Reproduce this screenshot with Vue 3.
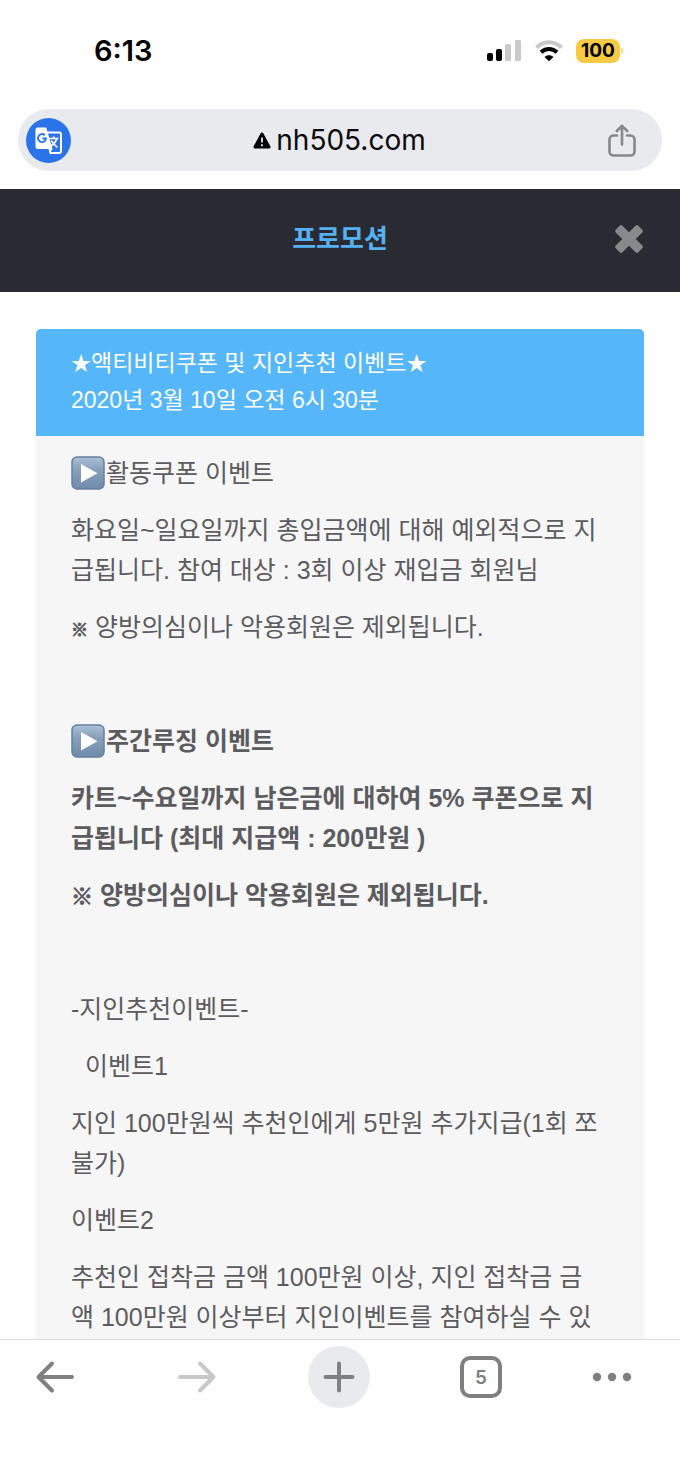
<script setup>
const blocks = [
  { text: '활동쿠폰 이벤트', icon: true },
  { text: '화요일~일요일까지 총입금액에 대해 예외적으로 지급됩니다. 참여 대상 : 3회 이상 재입금 회원님' },
  { mark: '※', text: ' 양방의심이나 악용회원은 제외됩니다.' },
  { text: '\u00a0' },
  { text: '주간루징 이벤트', icon: true, bold: true },
  { text: '카트~수요일까지 남은금에 대하여 5% 쿠폰으로 지급됩니다 (최대 지급액 : 200만원 )', bold: true },
  { mark: '※', text: ' 양방의심이나 악용회원은 제외됩니다.', bold: true },
  { text: '\u00a0' },
  { text: '-지인추천이벤트-' },
  { text: '\u00a0\u00a0이벤트1' },
  { text: '지인 100만원씩 추천인에게 5만원 추가지급(1회 쪼불가)' },
  { text: '이벤트2' },
  { text: '추천인 접착금 금액 100만원 이상, 지인 접착금 금액 100만원 이상부터 지인이벤트를 참여하실 수 있' },
]
</script>

<template>
  <div class="screen">
    <div class="status">
      <span class="time">6:13</span>
      <div class="indicators">
        <svg class="signal" width="34" height="22" viewBox="0 0 34 22" aria-hidden="true">
          <rect x="0" y="13" width="6" height="8" rx="2" fill="#000" />
          <rect x="9" y="9" width="6" height="12" rx="2" fill="#000" />
          <rect x="18" y="4" width="6" height="17" rx="1.500" fill="#cacaca" />
          <rect x="28" y="0" width="6" height="21" rx="1.500" fill="#cacaca" />
        </svg>
        <svg class="wifi" width="28" height="22" viewBox="0 0 28 22" aria-hidden="true">
          <path d="M1.500 7.600C8.300.400 19.700.400 26.500 7.600" fill="none" stroke="#c8c8c8" stroke-width="4" />
          <path d="M6 12.300c4.500-4.400 11.500-4.400 16 0" fill="none" stroke="#000" stroke-width="4" />
          <path d="M14 21.300 9.500 17c2.500-2.400 6.500-2.400 9 0z" fill="#000" />
        </svg>
        <span class="battery">100</span>
      </div>
    </div>

    <div class="address">
      <button class="translate" aria-label="Translate">
        <svg width="27" height="27" viewBox="0 0 27 27" aria-hidden="true">
          <path d="M11 5.500h13a2 2 0 0 1 2 2v16.500a2 2 0 0 1-2 2H15.500L11 5.500z" fill="#2a73e8" stroke="#fff" stroke-width="2" />
          <path d="M2.500.5h8.700L17.500 22H2.500a2 2 0 0 1-2-2V2.500a2 2 0 0 1 2-2z" fill="#fff" />
          <path d="M17.500 22 15 25.800 13.600 22z" fill="#fff" />
          <path d="M9.800 8.200a4 4 0 1 0 1.200 3.300H7.400" fill="none" stroke="#2a73e8" stroke-width="1.900" />
          <path d="M14 11.500h9.500M18.700 9.500v2M21.800 11.500c-.7 3-3 5.500-5.800 7.500M16.300 13.500c1.200 2.600 3.300 4.700 6 6.800" fill="none" stroke="#fff" stroke-width="1.700" />
        </svg>
      </button>
      <button class="host">
        <svg width="18" height="17" viewBox="0 0 18 17" aria-hidden="true">
          <path d="M9 2 16 15H2z" fill="#000" stroke="#000" stroke-width="3" stroke-linejoin="round" />
          <path d="M9 5.500v5M9 12.300v2" stroke="#e9eaed" stroke-width="1.800" />
        </svg>
        <span>nh505.com</span>
      </button>
      <button class="share" aria-label="Share">
        <svg width="28" height="33" viewBox="0 0 28 33" aria-hidden="true" fill="none" stroke="#85878b" stroke-width="2.600" stroke-linecap="round" stroke-linejoin="round">
          <path d="M9 11.500H5.500a4 4 0 0 0-4 4v12a4 4 0 0 0 4 4h17a4 4 0 0 0 4-4v-12a4 4 0 0 0-4-4H19" />
          <path d="M14 20.500V1.800M8.800 7 14 1.800 19.200 7" />
        </svg>
      </button>
    </div>

    <header class="titlebar">
      <h1>프로모션</h1>
      <button class="close" aria-label="닫기">
        <svg width="28" height="28" viewBox="0 0 28 28" aria-hidden="true" fill="#88898b">
          <rect x="-2" y="9.200" width="32" height="9.600" rx="2" transform="rotate(45 14 14)" />
          <rect x="-2" y="9.200" width="32" height="9.600" rx="2" transform="rotate(-45 14 14)" />
        </svg>
      </button>
    </header>

    <main class="content">
      <article class="card">
        <div class="card-head">
          <h2><span class="star">★</span>액티비티쿠폰 및 지인추천 이벤트<span class="star">★</span></h2>
          <time datetime="2020-03-10T06:30">2020년 3월 10일 오전 6시 30분</time>
        </div>
        <div class="card-body">
          <p v-for="(b, i) in blocks" :key="i" :class="{ bold: b.bold }">
            <svg v-if="b.icon" class="play" width="35" height="34" viewBox="0 0 35 34" aria-hidden="true">
              <defs>
                <linearGradient :id="'sky' + i" x1="0" y1="0" x2="0" y2="1">
                  <stop offset="0" stop-color="#a9c2d7" />
                  <stop offset="0.400" stop-color="#87a0b9" />
                  <stop offset="1" stop-color="#6f8cab" />
                </linearGradient>
              </defs>
              <rect x="1" y="1" width="32" height="32" rx="5" :fill="'url(#sky' + i + ')'" stroke="#66809e" stroke-width="1.500" />
              <path d="M10 8v18.500L26.500 17.200z" fill="#fff" />
            </svg><span v-if="b.mark" class="mark">{{ b.mark }}</span>{{ b.text }}
          </p>
        </div>
      </article>
    </main>

    <nav class="toolbar" aria-label="Browser">
      <button aria-label="Back">
        <svg width="38" height="32" viewBox="0 0 38 32" fill="none" stroke="#7e8082" stroke-width="4" stroke-linecap="round" stroke-linejoin="round"><path d="M36 16H2.500M16 2.500 2.500 16 16 29.500" /></svg>
      </button>
      <button aria-label="Forward">
        <svg width="38" height="32" viewBox="0 0 38 32" fill="none" stroke="#c8c8c8" stroke-width="4" stroke-linecap="round" stroke-linejoin="round"><path d="M2 16h33.500M22 2.500 35.500 16 22 29.500" /></svg>
      </button>
      <button class="add" aria-label="New tab">
        <svg width="32" height="32" viewBox="0 0 32 32" stroke="#7e8083" stroke-width="4" stroke-linecap="round"><path d="M16 2.500v27M2.500 16h27" /></svg>
      </button>
      <button aria-label="Tabs"><span class="tabs">5</span></button>
      <button class="more" aria-label="More">
        <svg width="40" height="10" viewBox="0 0 40 10" fill="#7e8082"><circle cx="5" cy="5" r="4.200" /><circle cx="20" cy="5" r="4.200" /><circle cx="35" cy="5" r="4.200" /></svg>
      </button>
    </nav>
  </div>
</template>

<style>
body {
  margin: 0;
  background: #fefefe;
}
</style>

<style scoped>
.screen {
  display: flex;
  flex-direction: column;
  height: 100vh;
  background: #fefefe;
  font-family: "Liberation Sans", "Noto Sans CJK KR", sans-serif;
}
button {
  display: flex;
  align-items: center;
  justify-content: center;
  padding: 0;
  border: 0;
  background: none;
  font: inherit;
  color: inherit;
  cursor: pointer;
}
svg {
  display: block;
  flex: none;
  overflow: visible;
}
.status {
  display: flex;
  flex: none;
  align-items: center;
  justify-content: space-between;
  height: 101px;
  padding: 0 60px 0 94px;
  box-sizing: border-box;
  margin-bottom: 8px;
  font-family: Inter, sans-serif;
  color: #000;
}
.time {
  font-size: 29px;
  font-weight: 600;
}
.indicators {
  display: flex;
  align-items: center;
}
.wifi {
  margin: 0 13px 0 14px;
}
.battery {
  position: relative;
  width: 44px;
  border-radius: 8px;
  background: #f7ca45;
  font-size: 19px;
  font-weight: 700;
  line-height: 24px;
  text-align: center;
}
.battery::after {
  content: "";
  position: absolute;
  top: 9px;
  right: -3px;
  width: 2px;
  height: 6px;
  border-radius: 0 2px 2px 0;
  background: #f7d676;
}
.address {
  display: flex;
  flex: none;
  align-items: center;
  justify-content: space-between;
  height: 62px;
  margin: 0 18px 18px;
  padding: 0 26px 0 8px;
  box-sizing: border-box;
  border-radius: 31px;
  background: #e9eaed;
}
.translate {
  width: 45px;
  height: 45px;
  border-radius: 50%;
  background: #2a73e8;
}
.host {
  gap: 5px;
  color: #0a0a0c;
  font-family: Inter, sans-serif;
  font-size: 28px;
}
.titlebar {
  display: grid;
  flex: none;
  grid-template-columns: 1fr auto 1fr;
  align-items: center;
  height: 103px;
  padding: 0 37px 3px;
  box-sizing: border-box;
  background: #2a2a32;
}
.titlebar h1 {
  grid-column: 2;
  margin: 0;
  font-size: 26px;
  font-weight: 700;
  line-height: 40px;
  color: #55b1f2;
}
.close {
  justify-self: end;
}
.content {
  flex: 1;
  min-height: 0;
  padding: 37px 36px 0;
  overflow-y: auto;
  scrollbar-width: none;
}
.card {
  min-height: 100%;
  border-radius: 5px 5px 0 0;
  overflow: hidden;
  background: #f6f6f7;
}
.card-head {
  padding: 16px 35px 17px;
  background: #56b6fa;
  color: #fff;
  font-size: 23px;
  line-height: 37px;
}
.card-head h2 {
  margin: 0;
  font: inherit;
}
.card-head time {
  display: block;
}
.star {
  font-size: 20px;
  line-height: 1;
}
.card-body {
  padding: 17px 42px 0 35px;
  color: #5c5c5f;
  font-size: 25px;
  line-height: 40px;
}
.card-body p {
  margin: 0 0 17px;
}
.card-body p:last-child {
  margin-bottom: 0;
}
.bold {
  font-weight: 700;
}
.play {
  display: inline-block;
  vertical-align: -8px;
}
.mark {
  font-size: 17px;
  line-height: 1;
  -webkit-text-stroke: 1px;
}
.bold .mark {
  font-size: 22px;
}
.toolbar {
  display: flex;
  flex: none;
  align-items: flex-start;
  justify-content: space-between;
  height: 135px;
  padding: 6px 48px 0 24px;
  box-sizing: border-box;
  border-top: 1px solid #dcdcdd;
  background: #fefefe;
}
.toolbar button {
  width: 62px;
  height: 62px;
}
.toolbar .more {
  width: 40px;
}
.toolbar .add {
  border-radius: 50%;
  background: #e9eaed;
}
.tabs {
  width: 42px;
  height: 42px;
  box-sizing: border-box;
  border: 4px solid #7e8082;
  border-radius: 10px;
  color: #7e8082;
  font-family: Inter, sans-serif;
  font-size: 19px;
  font-weight: 600;
  line-height: 35px;
  text-align: center;
}
</style>
